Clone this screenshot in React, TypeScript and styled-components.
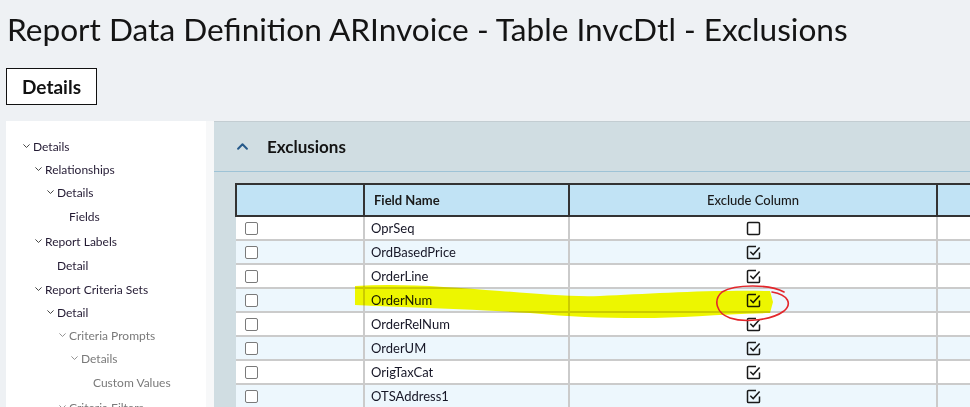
import React from 'react';
import styled, { createGlobalStyle } from 'styled-components';

const GlobalStyle = createGlobalStyle`
  html, body {
    margin: 0;
    padding: 0;
    background: #eef1f4;
    overflow: hidden;
  }
  * {
    box-sizing: border-box;
  }
`;

const Page = styled.div`
  position: relative;
  width: 970px;
  height: 407px;
  overflow: hidden;
  background: #eef1f4;
  font-family: Lato, 'Open Sans', sans-serif;
  color: #1b1b1b;
`;

const Title = styled.h1`
  margin: 0;
  padding: 10px 0 0 7px;
  height: 68px;
  font-size: 31.6px;
  font-weight: 400;
  line-height: 38px;
  color: #141414;
  white-space: nowrap;
`;

const DetailsButton = styled.button`
  display: block;
  margin-left: 6px;
  width: 91px;
  height: 37px;
  border: 1px solid #111;
  background: #fff;
  font-family: inherit;
  font-size: 19px;
  font-weight: 700;
  color: #111;
  padding: 0;
`;

const Main = styled.div`
  display: flex;
  margin-top: 16px;
  margin-left: 6px;
  height: 286px;
`;

const Sidebar = styled.nav`
  width: 200px;
  flex-shrink: 0;
  background: #fff;
  padding-top: 14px;
`;

const Gutter = styled.div`
  width: 8px;
  flex-shrink: 0;
  background: #f7f8f9;
`;

const TreeItem = styled.div<{ $level: number; $leaf?: boolean; $muted?: boolean }>`
  display: flex;
  align-items: center;
  height: ${p => (p.$leaf ? 25.5 : 23)}px;
  padding-left: ${p => 17 + p.$level * 12}px;
  font-size: 12px;
  color: ${p => (p.$muted ? '#7a7a7a' : '#231a33')};
  white-space: nowrap;
`;

const ChevronSlot = styled.span`
  display: inline-flex;
  width: 10px;
  flex-shrink: 0;
  align-items: center;
`;

const Panel = styled.section`
  flex: 1;
  background: #d0dde2;
  border-top: 1px solid #c3cdd2;
  overflow: hidden;
`;

const PanelHeader = styled.div`
  display: flex;
  align-items: center;
  height: 50px;
  padding-left: 23px;
  border-bottom: 1px solid #9ec3d6;
  gap: 19px;
`;

const PanelTitle = styled.h2`
  margin: 0;
  font-size: 17px;
  font-weight: 700;
  color: #141414;
`;

const PanelBody = styled.div`
  padding: 11px 0 0 21px;
`;

const Grid = styled.table`
  border-collapse: collapse;
  table-layout: fixed;
  width: 900px;
  font-size: 13px;
`;

const HeadCell = styled.th<{ $center?: boolean }>`
  height: 32px;
  background: #c1e3f5;
  border: 2px solid #333;
  text-align: ${p => (p.$center ? 'center' : 'left')};
  padding: 0 9px;
  font-weight: ${p => (p.$center ? 500 : 700)};
  color: #1a1a1a;
`;

const Row = styled.tr<{ $alt?: boolean }>`
  background: ${p => (p.$alt ? '#edf7fd' : '#fff')};
`;

const Cell = styled.td<{ $center?: boolean; $first?: boolean }>`
  height: 24px;
  padding: 0 6px 0 ${p => (p.$first ? 9 : 6)}px;
  border: 2px solid #cbcbcb;
  border-left: ${p => (p.$first ? 'none' : '2px solid #cbcbcb')};
  text-align: ${p => (p.$center ? 'center' : 'left')};
  color: #161626;
  line-height: 1;
`;

const RowCheck = styled.span`
  display: block;
  width: 13px;
  height: 13px;
  border: 1.5px solid #7a7a7a;
  border-radius: 2px;
  background: #fff;
`;

const Annotations = styled.svg`
  position: absolute;
  left: 0;
  top: 0;
  pointer-events: none;
`;

const Highlight = styled.path`
  fill: #eef600;
  mix-blend-mode: darken;
`;

const Chevron: React.FC<{ up?: boolean; color?: string; size?: number }> = ({
  up,
  color = '#333',
  size = 7,
}) => (
  <svg width={size} height={size * 0.6} viewBox="0 0 10 6" fill="none">
    <path
      d={up ? 'M1 5.2 5 1.2 9 5.2' : 'M1 1 5 5 9 1'}
      stroke={color}
      strokeWidth={up ? 1.8 : 1.3}
      strokeLinecap="round"
      strokeLinejoin="round"
    />
  </svg>
);

const CheckIcon: React.FC<{ checked: boolean }> = ({ checked }) => (
  <svg width="15" height="15" viewBox="0 0 15 15" fill="none" style={{ display: 'inline-block', verticalAlign: 'middle' }}>
    {checked ? (
      <>
        <path
          d="M10 1.5H2.6a1.1 1.1 0 0 0-1.1 1.1v9.8a1.1 1.1 0 0 0 1.1 1.1h9.8a1.1 1.1 0 0 0 1.1-1.1V7.5"
          stroke="#1a1a1a"
          strokeWidth="1.5"
        />
        <path d="M4.3 6.8 7.2 9.6 13.6 2.4" stroke="#1a1a1a" strokeWidth="1.5" />
      </>
    ) : (
      <rect x="1.5" y="1.5" width="12" height="12" rx="1.3" stroke="#1a1a1a" strokeWidth="1.5" />
    )}
  </svg>
);

type Node = { label: string; level: number; leaf?: boolean; muted?: boolean };

const tree: Node[] = [
  { label: 'Details', level: 0 },
  { label: 'Relationships', level: 1 },
  { label: 'Details', level: 2 },
  { label: 'Fields', level: 3, leaf: true },
  { label: 'Report Labels', level: 1 },
  { label: 'Detail', level: 2, leaf: true },
  { label: 'Report Criteria Sets', level: 1 },
  { label: 'Detail', level: 2 },
  { label: 'Criteria Prompts', level: 3, muted: true },
  { label: 'Details', level: 4, muted: true },
  { label: 'Custom Values', level: 5, leaf: true, muted: true },
  { label: 'Criteria Filters', level: 3, muted: true },
];

const fields: { name: string; excluded: boolean }[] = [
  { name: 'OprSeq', excluded: false },
  { name: 'OrdBasedPrice', excluded: true },
  { name: 'OrderLine', excluded: true },
  { name: 'OrderNum', excluded: true },
  { name: 'OrderRelNum', excluded: true },
  { name: 'OrderUM', excluded: true },
  { name: 'OrigTaxCat', excluded: true },
  { name: 'OTSAddress1', excluded: true },
];

export default function App() {
  return (
    <Page>
      <GlobalStyle />
      <Title>Report Data Definition ARInvoice - Table InvcDtl - Exclusions</Title>
      <DetailsButton>Details</DetailsButton>
      <Main>
        <Sidebar>
          {tree.map((n, i) => (
            <TreeItem key={i} $level={n.level} $leaf={n.leaf} $muted={n.muted}>
              <ChevronSlot>{!n.leaf && <Chevron color={n.muted ? '#888' : '#333'} />}</ChevronSlot>
              {n.label}
            </TreeItem>
          ))}
        </Sidebar>
        <Gutter />
        <Panel>
          <PanelHeader>
            <Chevron up color="#25598a" size={11} />
            <PanelTitle>Exclusions</PanelTitle>
          </PanelHeader>
          <PanelBody>
            <Grid>
              <colgroup>
                <col style={{ width: 128 }} />
                <col style={{ width: 205 }} />
                <col style={{ width: 368 }} />
                <col style={{ width: 199 }} />
              </colgroup>
              <thead>
                <tr>
                  <HeadCell />
                  <HeadCell>Field Name</HeadCell>
                  <HeadCell $center>Exclude Column</HeadCell>
                  <HeadCell />
                </tr>
              </thead>
              <tbody>
                {fields.map((f, i) => (
                  <Row key={f.name} $alt={i % 2 === 1}>
                    <Cell $first>
                      <RowCheck />
                    </Cell>
                    <Cell>{f.name}</Cell>
                    <Cell $center>
                      <CheckIcon checked={f.excluded} />
                    </Cell>
                    <Cell />
                  </Row>
                ))}
              </tbody>
            </Grid>
          </PanelBody>
        </Panel>
      </Main>
      <Annotations width="970" height="407" viewBox="0 0 970 407">
        <Highlight d="M355 286 C400 283 450 287 500 291 C540 294 570 297 600 296 C650 294 700 290 770 291 L773 302 L770 313 C720 314 680 318 640 318 C600 318 570 317 530 313 C470 309 420 308 355 305 Z" />
        <path
          d="M784 292 C770 284 735 284 722 292 C713 300 716 313 730 318 C745 323 772 320 784 311 C792 304 789 295 772 292"
          fill="none"
          stroke="#e3262b"
          strokeWidth="1.6"
          strokeLinecap="round"
        />
      </Annotations>
    </Page>
  );
}
